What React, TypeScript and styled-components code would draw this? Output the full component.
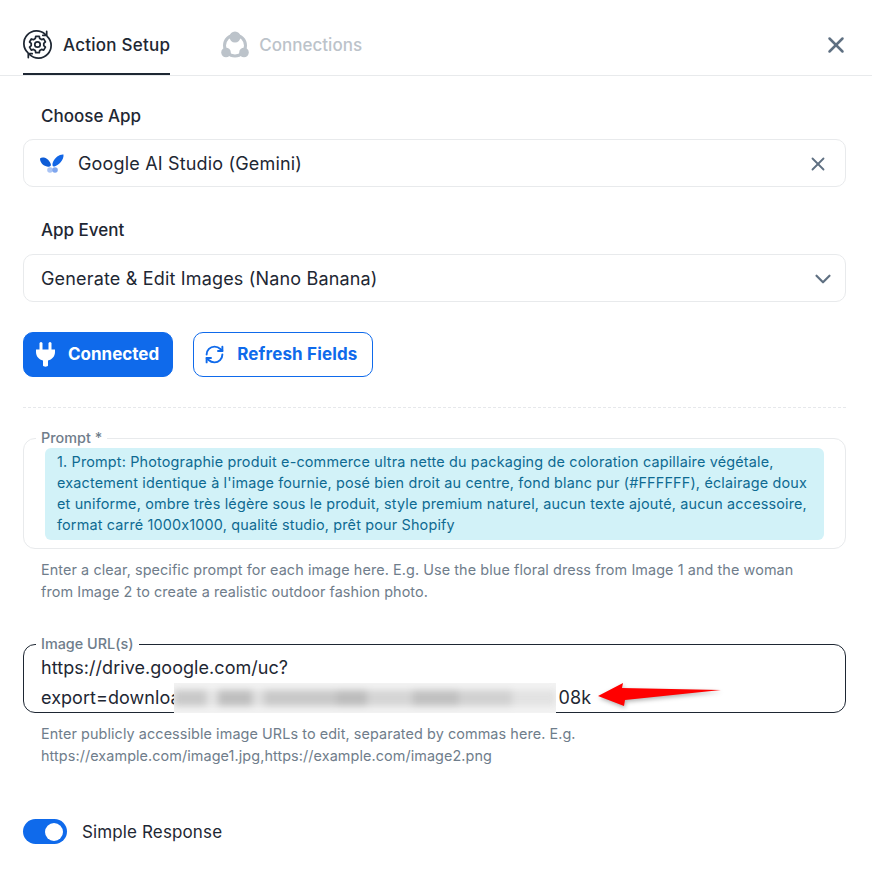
import React from "react";
import styled, {createGlobalStyle} from "styled-components";
import {RefreshCw, X, ChevronDown} from "lucide-react";

const Global = createGlobalStyle`
  * {
    box-sizing: border-box;
  }

  body {
    margin: 0;
    background: #fff;
    font-family: "Inter", "Liberation Sans", sans-serif;
    color: #1e2733;
  }
`;

const Page = styled.div`
  width: 872px;
  height: 879px;
  overflow: hidden;
`;

const Tabs = styled.div`
  display: flex;
  align-items: stretch;
  height: 76px;
  padding: 0 23px 0 23px;
  border-bottom: 1px solid #e8eaec;
`;

const Tab = styled.div<{ $active?: boolean }>`
  display: flex;
  align-items: center;
  gap: ${p => p.$active ? "11px" : "10px"};
  height: 75px;
  padding-top: 16px;
  margin-right: 51px;
  font-size: 17px;
  font-weight: 500;
  letter-spacing: ${p => p.$active ? "0.25px" : "0"};
  color: ${p => p.$active ? "#1e2733" : "#bcc3ca"};
  border-bottom: 2px solid ${p => p.$active ? "#1e2733" : "transparent"};
`;

const CloseTab = styled.div`
  margin-left: auto;
  padding-top: 14px;
  display: flex;
  align-items: center;
  color: #5f7082;
`;

const Body = styled.div`
  padding: 0 26px 0 23px;
`;

const FieldLabel = styled.div<{ $top: number }>`
  padding: ${p => p.$top}px 0 0 18px;
  font-size: 17px;
  font-weight: 500;
  line-height: 24px;
`;

const SelectBox = styled.div<{ $gap: number }>`
  display: flex;
  align-items: center;
  height: 48px;
  margin-top: ${p => p.$gap}px;
  padding: 1px 17px 0;
  border: 1px solid #e8eaec;
  border-radius: 10px;
  font-size: 18px;
  letter-spacing: 0.17px;
  font-weight: 400;
`;

const LogoSlot = styled.span`
  display: flex;
  margin-left: -1px;
`;

const AppName = styled.span`
  margin-left: 14px;
`;

const TrailingIcon = styled.span<{ $shift: number }>`
  margin-left: auto;
  margin-right: ${p => p.$shift}px;
  display: flex;
  color: #5f7082;
`;

const Actions = styled.div`
  display: flex;
  gap: 20px;
  margin-top: 30px;
`;

const SolidButton = styled.div`
  display: flex;
  align-items: center;
  gap: 13px;
  height: 45px;
  padding: 0 13px 1px 12px;
  border: 1px solid #0f6aeb;
  border-radius: 10px;
  font-size: 17px;
  font-weight: 700;
  background: #0f6aeb;
  color: #fff;
`;

const OutlineButton = styled(SolidButton)`
  gap: 12px;
  padding: 0 15px 1px 10px;
  letter-spacing: 0.15px;
  background: #fff;
  color: #0f6aeb;
`;

const Divider = styled.div`
  margin-top: 30px;
  border-top: 1px dashed #e6e8eb;
`;

const Fieldset = styled.fieldset<{ $dark?: boolean; $height: number; $top: number }>`
  display: block;
  height: ${p => p.$height}px;
  margin: ${p => p.$top}px 0 0;
  padding: 0 12px;
  min-width: 0;
  border: 1px solid ${p => p.$dark ? "#1e2733" : "#e8eaec"};
  border-radius: 12px;
`;

const Legend = styled.legend`
  padding: 0 5px;
  font-size: 14.4px;
  font-weight: 500;
  line-height: 14px;
  color: #6f7d8b;
`;

const Highlight = styled.div`
  margin: 3px 9px 0;
  padding: 3px 12px 5px;
  background: #d2f2f8;
  border-radius: 6px;
  font-size: 14.4px;
  letter-spacing: 0.17px;
  line-height: 21.1px;
  white-space: nowrap;
  color: #0e6a92;
`;

const Hint = styled.div`
  margin-top: 10px;
  padding-left: 18px;
  font-size: 14.4px;
  letter-spacing: 0.085px;
  line-height: 22px;
  color: #6f7d8b;
`;

const UrlText = styled.div`
  position: relative;
  margin: 2px 0 0 5px;
  font-size: 18px;
  letter-spacing: 0.05px;
  line-height: 30px;
  white-space: nowrap;
  color: #1e2733;
`;

const Blurred = styled.span`
  display: inline-block;
  width: 382px;
  height: 30px;
  margin: 0 3px 0 -7px;
  vertical-align: top;
  overflow: hidden;
  background: #f3f3f3;
`;

const Smudge = styled.span`
  display: block;
  height: 16px;
  margin-top: 7px;
  background: linear-gradient(90deg,
    #c8c8c8 0 8%, #e4e4e4 9% 11%, #bebebe 12% 20%, #e0e0e0 21% 23%,
    #c8c8c8 24% 42%, #bcbcbc 43% 50%, #d4d4d4 51% 62%, #c0c0c0 63% 74%,
    #d0d0d0 75% 88%, #e2e2e2 89% 100%);
  filter: blur(3.5px);
`;

const Arrow = styled.svg`
  position: absolute;
  left: 555px;
  top: 28px;
  filter: drop-shadow(1px 2px 2px rgba(0, 0, 0, .3));
`;

const ToggleRow = styled.div`
  display: flex;
  align-items: center;
  gap: 15px;
  margin-top: 52px;
  font-size: 17px;
  letter-spacing: 0.13px;
`;

const Toggle = styled.div`
  display: flex;
  justify-content: flex-end;
  align-items: center;
  width: 44px;
  height: 25px;
  padding: 0 4px;
  border-radius: 13px;
  background: #0f6aeb;
`;

const Knob = styled.div`
  width: 18px;
  height: 18px;
  border-radius: 50%;
  background: #fff;
`;

const GearIcon = () => (
	<svg width="29" height="29" viewBox="0 0 30 30" fill="none" stroke="#1e2733" strokeWidth="1.8" strokeLinecap="round" strokeLinejoin="round">
		<path d="M5 23.500A13 13 0 0 1 23 4.500"/>
		<path d="M25 6.500A13 13 0 0 1 7 25.500"/>
		<path d="M24.500 1.500V5.500H20.500"/>
		<path d="M5.500 28.500V24.500H9.500"/>
		<path d="M13.200 7.500h3.600l.5 2.300 1.900 1.100 2.200-.7 1.800 3.100-1.700 1.600v2.200l1.700 1.600-1.800 3.100-2.200-.7-1.900 1.100-.5 2.300h-3.600l-.5-2.300-1.900-1.100-2.200.7-1.800-3.100 1.700-1.600v-2.200L6.800 13.400l1.800-3.100 2.200.7 1.900-1.100z" transform="translate(0 -1)"/>
		<circle cx="15" cy="15" r="2.800"/>
	</svg>
);

const ConnectionsIcon = () => (
	<svg width="28" height="28" viewBox="0 0 28 28" fill="none">
		<circle cx="14" cy="14.500" r="10.500" stroke="#bcc3ca" strokeWidth="3"/>
		<circle cx="14" cy="6" r="5.500" fill="#bcc3ca"/>
		<circle cx="5" cy="21.500" r="4.800" fill="#bcc3ca"/>
		<circle cx="23" cy="21.500" r="4.800" fill="#bcc3ca"/>
	</svg>
);

const AppLogo = () => (
	<svg width="24" height="20" viewBox="0 0 24 20">
		<path d="M0 4.500C2 2.500 8 3 10.800 10C11.500 12.500 9.500 13 7 12.500C3 11.800 0 8.500 0 4.500Z" fill="#0d5cd6"/>
		<path d="M23.500 .500C24 6 19 11 14.500 12.500C12.500 13 11.800 11 13 8C15 3 20 0 23.500 .500Z" fill="#1266e6"/>
		<circle cx="10" cy="16" r="2.800" fill="#a9c4f5"/>
		<circle cx="15" cy="16" r="2.800" fill="#7fa6ee"/>
	</svg>
);

const PlugIcon = () => (
	<svg width="19" height="25" viewBox="0 0 19 25" fill="#fff">
		<rect x="3.500" y="0" width="3" height="9" rx="1.500"/>
		<rect x="12.500" y="0" width="3" height="9" rx="1.500"/>
		<path d="M0 7.500H19V10C19 14.500 16 17.500 12 18.500V23.500C12 25 7 25 7 23.500V18.500C3 17.500 0 14.500 0 10Z"/>
	</svg>
);

const App = () => (
	<Page>
		<Global/>
		<Tabs>
			<Tab $active><GearIcon/>Action Setup</Tab>
			<Tab><ConnectionsIcon/>Connections</Tab>
			<CloseTab><X size={26} strokeWidth={2.3}/></CloseTab>
		</Tabs>
		<Body>
			<FieldLabel $top={28}>Choose App</FieldLabel>
			<SelectBox $gap={11}>
				<LogoSlot><AppLogo/></LogoSlot>
				<AppName>Google AI Studio (Gemini)</AppName>
				<TrailingIcon $shift={-1}><X size={22} strokeWidth={2}/></TrailingIcon>
			</SelectBox>
			<FieldLabel $top={31}>App Event</FieldLabel>
			<SelectBox $gap={12}>
				Generate &amp; Edit Images (Nano Banana)
				<TrailingIcon $shift={-8}><ChevronDown size={26} strokeWidth={2}/></TrailingIcon>
			</SelectBox>
			<Actions>
				<SolidButton><PlugIcon/>Connected</SolidButton>
				<OutlineButton><RefreshCw size={21} strokeWidth={2.2}/>Refresh Fields</OutlineButton>
			</Actions>
			<Divider/>
			<Fieldset $height={118} $top={23}>
				<Legend>Prompt *</Legend>
				<Highlight>
					1. Prompt: Photographie produit e-commerce ultra nette du packaging de coloration capillaire végétale,<br/>
					exactement identique à l'image fournie, posé bien droit au centre, fond blanc pur (#FFFFFF), éclairage doux<br/>
					et uniforme, ombre très légère sous le produit, style premium naturel, aucun texte ajouté, aucun accessoire,<br/>
					format carré 1000x1000, qualité studio, prêt pour Shopify
				</Highlight>
			</Fieldset>
			<Hint>
				Enter a clear, specific prompt for each image here. E.g. Use the blue floral dress from Image 1 and the woman<br/>
				from Image 2 to create a realistic outdoor fashion photo.
			</Hint>
			<Fieldset $dark $height={76} $top={34}>
				<Legend>Image URL(s)</Legend>
				<UrlText>
					https://drive.google.com/uc?<br/>
					export=downloa<Blurred><Smudge/></Blurred>08k
					<Arrow width="130" height="30" viewBox="0 0 130 30">
						<path d="M2 15L27 2L26 7L125 9L29 19L28 25Z" fill="#f00"/>
					</Arrow>
				</UrlText>
			</Fieldset>
			<Hint>
				Enter publicly accessible image URLs to edit, separated by commas here. E.g.<br/>
				https://example.com/image1.jpg,https://example.com/image2.png
			</Hint>
			<ToggleRow><Toggle><Knob/></Toggle>Simple Response</ToggleRow>
		</Body>
	</Page>
);

export default App;
